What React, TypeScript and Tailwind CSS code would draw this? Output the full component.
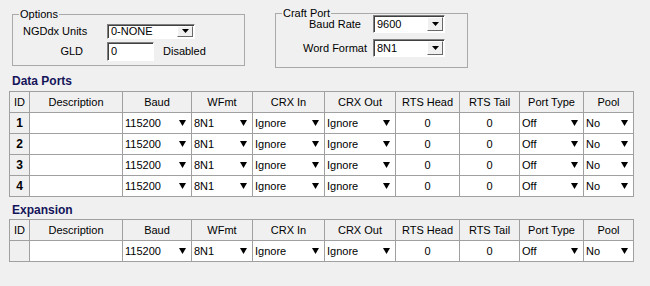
import React from "react";

const COLS = "grid grid-cols-[20px_93px_69px_61px_72px_71px_64px_60px_64px_50px]";

function Arrow() {
  return (
    <svg width="7" height="6" viewBox="0 0 7 6" className="shrink-0">
      <path d="M0 0H7L3.5 6Z" fill="#000" />
    </svg>
  );
}

function SmallArrow() {
  return (
    <svg width="7" height="4" viewBox="0 0 7 4">
      <path d="M0 0H7L3.5 4Z" fill="#000" />
    </svg>
  );
}

function Combo({ value, w, h, btnW }: { value: string; w: string; h: string; btnW: string }) {
  return (
    <div
      className={`flex items-stretch bg-white border border-t-[#808080] border-l-[#808080] border-b-[#ffffff] border-r-[#ffffff] shadow-[inset_1px_1px_0_#404040] ${w} ${h}`}
    >
      <div className="flex-1 flex items-center pl-[3px] leading-none">{value}</div>
      <div
        className={`flex items-center justify-center bg-[#f0f0f0] border border-t-white border-l-white border-b-[#696969] border-r-[#696969] m-[1px] ${btnW}`}
      >
        <SmallArrow />
      </div>
    </div>
  );
}

function Head({ children }: { children?: React.ReactNode }) {
  return (
    <div className="flex items-center justify-center border-r border-b border-[#a0a0a0] h-[21px]">
      {children}
    </div>
  );
}

function Drop({ v }: { v: string }) {
  return (
    <div className="flex items-center justify-between bg-white pl-[2px] pr-[5px] border-r border-b border-[#a0a0a0] h-[21px]">
      <span>{v}</span>
      <Arrow />
    </div>
  );
}

function Num({ v }: { v: string }) {
  return (
    <div className="flex items-center justify-center bg-white border-r border-b border-[#a0a0a0] h-[21px]">
      {v}
    </div>
  );
}

function Plain() {
  return <div className="bg-white border-r border-b border-[#a0a0a0] h-[21px]" />;
}

function IdCell({ v }: { v?: string }) {
  return (
    <div className="flex items-center justify-center bg-[#f0f0f0] font-bold text-[12px] border-r border-b border-[#a0a0a0] h-[21px]">
      {v}
    </div>
  );
}

const headers = [
  "ID",
  "Description",
  "Baud",
  "WFmt",
  "CRX In",
  "CRX Out",
  "RTS Head",
  "RTS Tail",
  "Port Type",
  "Pool",
];

function Row({ id }: { id?: string }) {
  return (
    <>
      <IdCell v={id} />
      <Plain />
      <Drop v="115200" />
      <Drop v="8N1" />
      <Drop v="Ignore" />
      <Drop v="Ignore" />
      <Num v="0" />
      <Num v="0" />
      <Drop v="Off" />
      <Drop v="No" />
    </>
  );
}

function Table({ ids }: { ids: (string | undefined)[] }) {
  return (
    <div className={`${COLS} w-fit ml-[9px] border-l border-t border-[#a0a0a0]`}>
      {headers.map((h) => (
        <Head key={h}>{h}</Head>
      ))}
      {ids.map((id, i) => (
        <Row key={i} id={id} />
      ))}
    </div>
  );
}

export default function App() {
  return (
    <div
      className="w-[650px] h-[286px] bg-[#f0f0f0] overflow-hidden text-[11px] text-black"
      style={{ fontFamily: '"Liberation Sans", Arial, sans-serif' }}
    >
      <div className="flex items-start pt-[13px]">
        {/* Options */}
        <div className="relative ml-[12px] mt-[1px] w-[233px] border border-[#a9a9a9] pt-[9px] pb-[4px]">
          <span className="absolute -top-[7px] left-[6px] px-[1px] bg-[#f0f0f0] leading-[13px]">
            Options
          </span>
          <div className="flex items-center h-[14px]">
            <div className="w-[94px] pl-[10px] leading-none">NGDdx Units</div>
            <Combo value="0-NONE" w="w-[88px]" h="h-[15px]" btnW="w-[16px]" />
          </div>
          <div className="flex items-center h-[19px] mt-[4px]">
            <div className="w-[94px] pr-[24px] text-right leading-none">GLD</div>
            <div className="w-[47px] h-[19px] bg-white border border-t-[#808080] border-l-[#808080] border-b-white border-r-white shadow-[inset_1px_1px_0_#404040] flex items-center pl-[3px]">
              0
            </div>
            <div className="ml-[9px]">Disabled</div>
          </div>
        </div>

        {/* Craft Port */}
        <div className="relative ml-[30px] w-[193px] border border-[#a9a9a9] pt-[1px] pb-[10px]">
          <span className="absolute -top-[7px] left-[6px] px-[1px] bg-[#f0f0f0] leading-[13px]">
            Craft Port
          </span>
          <div className="flex items-center h-[18px]">
            <div className="w-[97px] pl-[21px] text-center leading-none">Baud Rate</div>
            <Combo value="9600" w="w-[72px]" h="h-[18px]" btnW="w-[16px]" />
          </div>
          <div className="flex items-center h-[18px] mt-[6px]">
            <div className="w-[97px] pl-[21px] text-center leading-none">Word Format</div>
            <Combo value="8N1" w="w-[72px]" h="h-[18px]" btnW="w-[16px]" />
          </div>
        </div>
      </div>

      <div className="mt-[7px] ml-[12px] leading-[13px] text-[12px] font-bold text-[#15155a]">
        Data Ports
      </div>
      <div className="mt-[3px]">
        <Table ids={["1", "2", "3", "4"]} />
      </div>

      <div className="mt-[7px] ml-[12px] leading-[13px] text-[12px] font-bold text-[#15155a]">
        Expansion
      </div>
      <div className="mt-[2px]">
        <Table ids={[undefined]} />
      </div>
    </div>
  );
}
